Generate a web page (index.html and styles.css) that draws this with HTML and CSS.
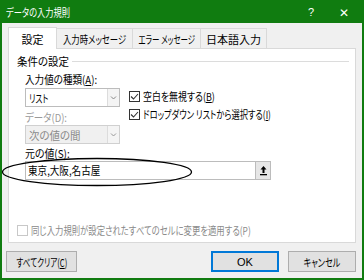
FILE: index.html
```html
<!DOCTYPE html>
<html lang="ja">
<head>
<meta charset="utf-8">
<link rel="stylesheet" href="styles.css">
</head>
<body>
<div class="window">
  <div class="titlebar">
    <span class="title"><span class="sx s75">データの入力規則</span></span>
    <span class="help">?</span>
    <span class="close">✕</span>
  </div>
  <div class="client">
    <div class="tabs">
      <div class="tab active">設定</div>
      <div class="tab t2"><span class="sx sc s76">入力時メッセージ</span></div>
      <div class="tab t3"><span class="sx sc s68">エラー&nbsp;メッセージ</span></div>
      <div class="tab t4">日本語入力</div>
    </div>
    <div class="panel">
      <div class="group-title"><span class="sx s95">条件の設定</span><span class="rule"></span></div>
      <div class="cols">
        <div class="left">
          <div class="label"><span class="sx s87">入力値の種類(<u>A</u>):</span></div>
          <div class="combo"><span class="combo-text"><span class="sx s71">リスト</span></span><span class="arrow"><svg width="7" height="5" viewBox="0 0 7 5"><path d="M1 1.5 L3.5 4 L6 1.5" fill="none" stroke="#888" stroke-width="1"/></svg></span></div>
          <div class="label disabled lbl-d"><span class="sx s86">データ(D):</span></div>
          <div class="combo disabled-combo"><span class="combo-text"><span class="sx s95">次の値の間</span></span><span class="arrow"><svg width="7" height="5" viewBox="0 0 7 5"><path d="M1 1.5 L3.5 4 L6 1.5" fill="none" stroke="#999" stroke-width="1"/></svg></span></div>
        </div>
        <div class="right">
          <label class="check c1"><span class="box"><svg width="11" height="11" viewBox="0 0 11 11"><path d="M2 5.5 L4.5 8 L9 3" fill="none" stroke="#333" stroke-width="1.1"/></svg></span><span class="sx s81">空白を無視する(<u>B</u>)</span></label>
          <label class="check c2"><span class="box"><svg width="11" height="11" viewBox="0 0 11 11"><path d="M2 5.5 L4.5 8 L9 3" fill="none" stroke="#333" stroke-width="1.1"/></svg></span><span class="sx s75">ドロップダウン リストから選択する(<u>I</u>)</span></label>
        </div>
      </div>
      <div class="label lbl-s"><span class="sx s90">元の値(<u>S</u>):</span></div>
      <div class="source">
        <div class="input"><span class="sx s87">東京,大阪,名古屋</span></div>
        <div class="pick"><svg width="9" height="11" viewBox="0 0 9 11"><path d="M4.5 1 L1.5 4.5 H3.5 V8 H5.5 V4.5 H7.5 Z" fill="#000"/><rect x="1" y="9" width="7" height="1.3" fill="#000"/></svg></div>
      </div>
      <label class="check apply"><span class="box dbox"></span><span class="sx s76">同じ入力規則が設定されたすべてのセルに変更を適用する(P)</span></label>
    </div>
    <div class="buttons">
      <div class="btn clear"><span class="sx sc s69">すべてクリア(<u>C</u>)</span></div>
      <div class="spacer"></div>
      <div class="btn ok">OK</div>
      <div class="btn cancel"><span class="sx sc s74">キャンセル</span></div>
    </div>
  </div>
  <svg class="ellipse" width="200" height="34" viewBox="0 0 200 34"><ellipse cx="97" cy="16" rx="94.5" ry="13.5" fill="none" stroke="#000" stroke-width="1.3"/></svg>
</div>
</body>
</html>
```
FILE: styles.css
```css
* { box-sizing: border-box; }
html, body { margin: 0; padding: 0; }
body {
  width: 364px;
  height: 280px;
  background: #107c10;
  font-family: "Noto Sans CJK JP", "Noto Sans", sans-serif;
  font-feature-settings: "palt" 1;
  font-size: 11px;
  color: #000;
  overflow: hidden;
}
.sx {
  display: inline-block;
  white-space: nowrap;
  transform-origin: left center;
}
.sc { transform-origin: center center; }
.s68 { transform: scaleX(0.68); }
.s69 { transform: scaleX(0.69); }
.s71 { transform: scaleX(0.71); }
.s73 { transform: scaleX(0.73); }
.s74 { transform: scaleX(0.74); }
.s75 { transform: scaleX(0.75); }
.s76 { transform: scaleX(0.76); }
.s81 { transform: scaleX(0.81); }
.s86 { transform: scaleX(0.86); }
.s87 { transform: scaleX(0.87); }
.s90 { transform: scaleX(0.90); }
.s95 { transform: scaleX(0.95); }
.window {
  position: relative;
  width: 364px;
  height: 280px;
  display: flex;
  flex-direction: column;
}
.titlebar {
  height: 23px;
  display: flex;
  align-items: center;
  color: #fff;
  padding-left: 6px;
}
.title { flex: 1; font-size: 11px; }
.help { width: 10px; font-size: 11px; margin-right: 21px; font-family: "Liberation Sans", sans-serif; }
.close { width: 12px; font-size: 12px; margin-right: 13px; }
.client {
  flex: 1;
  margin: 0 2px 2px 2px;
  background: #f0f0f0;
  padding: 4px 6px 0 6px;
  display: flex;
  flex-direction: column;
}
.tabs {
  display: flex;
  height: 21px;
  align-items: flex-end;
  position: relative;
  z-index: 1;
}
.tab {
  flex: none;
  min-width: 0;
  height: 20px;
  border: 1px solid #d9d9d9;
  border-bottom: none;
  border-left: none;
  background: #f0f0f0;
  display: flex;
  align-items: center;
  justify-content: center;
  white-space: nowrap;
}
.tab.active {
  width: 49px;
  height: 22px;
  background: #fff;
  border-left: 1px solid #d9d9d9;
  margin-bottom: -1px;
}
.t2 { width: 76px; }
.t3 { width: 68px; }
.t4 { width: 66px; }
.panel {
  position: relative;
  width: 348px;
  height: 195px;
  background: #fff;
  border: 1px solid #d9d9d9;
  padding: 5px 0 0 8px;
}
.group-title {
  display: flex;
  align-items: center;
  height: 14px;
}
.group-title .rule {
  flex: 1;
  height: 1px;
  background: #dcdcdc;
  margin: 0 6px 0 0;
}
.cols { display: flex; margin-top: 4px; }
.left { width: 104px; margin-left: 8px; flex: none; }
.right { display: flex; flex-direction: column; }
.label { height: 15px; line-height: 15px; white-space: nowrap; }
.label.disabled { color: #9a9a9a; }
.combo {
  margin-top: 1px;
  width: 95px;
  height: 19px;
  border: 1px solid #bcbcbc;
  background: #fff;
  display: flex;
  align-items: center;
}
.combo-text { flex: 1; padding-left: 3px; overflow: hidden; }
.arrow {
  width: 12px;
  height: 17px;
  border-left: 1px solid #dcdcdc;
  display: flex;
  align-items: center;
  justify-content: center;
  background: #f4f4f4;
}
.disabled-combo { background: #f0f0f0; border-color: #d0d0d0; color: #8a8a8a; margin-top: 0; }
.lbl-d { margin-top: 3px; }
.check {
  display: flex;
  align-items: center;
  height: 14px;
  white-space: nowrap;
}
.c1 { margin-top: 17px; }
.c2 { margin-top: 4px; }
.box {
  width: 11px;
  height: 11px;
  border: 1px solid #333;
  margin-right: 3px;
  display: flex;
  align-items: center;
  justify-content: center;
  background: #fff;
  flex: none;
}
.box svg { flex: none; }
.lbl-s { margin-top: 2px; margin-left: 8px; }
.source { display: flex; margin-left: 8px; margin-top: 0; }
.input {
  width: 230px;
  height: 19px;
  border: 1px solid #bcbcbc;
  border-right: none;
  padding-left: 2px;
  line-height: 17px;
}
.pick {
  width: 16px;
  height: 19px;
  border: 1px solid #bcbcbc;
  background: #e6e6e6;
  display: flex;
  align-items: center;
  justify-content: center;
}
.apply { position: absolute; left: 0; top: 174px; margin-left: 8px; color: #8a8a8a; }
.dbox { border-color: #c8c8c8; }
.buttons {
  display: flex;
  margin-top: 8px;
  margin-left: -2px;
  margin-right: 0;
}
.btn {
  height: 21px;
  border: 1px solid #adadad;
  background: #e1e1e1;
  display: flex;
  align-items: center;
  justify-content: center;
  white-space: nowrap;
}
.clear { width: 71px; }
.spacer { flex: 1; }
.ok { width: 68px; border: 2px solid #0078d7; margin-right: 9px; font-family: "Liberation Sans", "Noto Sans CJK JP", sans-serif; }
.cancel { width: 68px; }
.ellipse { position: absolute; left: 0; top: 156px; }
```
